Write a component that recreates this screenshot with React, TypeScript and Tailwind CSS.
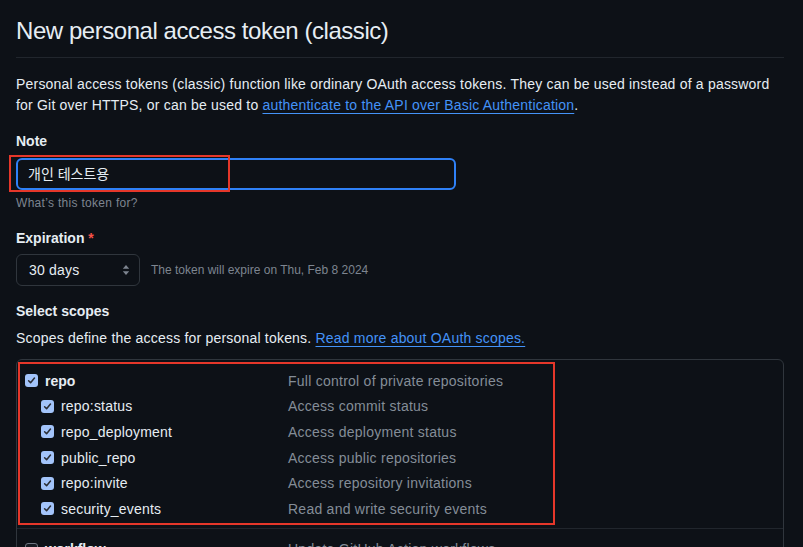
import type { ReactNode } from 'react';

// GitHub dark theme – "New personal access token (classic)" form

const scopes = [
  { name: 'repo:status', desc: 'Access commit status' },
  { name: 'repo_deployment', desc: 'Access deployment status' },
  { name: 'public_repo', desc: 'Access public repositories' },
  { name: 'repo:invite', desc: 'Access repository invitations' },
  { name: 'security_events', desc: 'Read and write security events' },
];

function Checkbox({ checked }: { checked: boolean }) {
  if (!checked) {
    return <span className="block w-[13px] h-[13px] shrink-0 rounded-[3px] border border-[#6e7681] bg-[#161b22]" />;
  }
  return (
    <span className="flex items-center justify-center w-[13px] h-[13px] shrink-0 rounded-[3px] bg-[#a3c4fa]">
      <svg width="9" height="9" viewBox="0 0 10 10" fill="none">
        <path d="M1.8 5.3 4 7.5 8.3 2.3" stroke="#2a2d33" strokeWidth="1.7" strokeLinecap="round" strokeLinejoin="round" />
      </svg>
    </span>
  );
}

function ScopeRow({ name, desc, checked, parent = false }: { name: string; desc: string; checked: boolean; parent?: boolean }) {
  return (
    <div className="grid grid-cols-[263px_1fr] items-center h-[25.6px]">
      <div className={`flex items-center gap-[7px] ${parent ? '' : 'pl-4'}`}>
        <Checkbox checked={checked} />
        <span className={parent ? 'font-bold text-[#e6edf3]' : 'text-[#e6edf3] tracking-[0.2px]'}>{name}</span>
      </div>
      <span className="text-[#848d97] tracking-[0.25px]">{desc}</span>
    </div>
  );
}

function Label({ children }: { children: ReactNode }) {
  return <div className="text-sm leading-[21px] font-bold text-[#e6edf3]">{children}</div>;
}

export default function App() {
  return (
    <div className="min-h-screen bg-[#0d1117] text-[#e6edf3] font-['Liberation_Sans','Noto_Sans_CJK_KR',sans-serif] overflow-hidden">
      <div className="w-[768px] ml-4 pt-[13px]">
        <h2 className="text-[24px] leading-[36px] font-normal tracking-[-0.45px] pb-2 border-b border-[#21262d]">
          New personal access token (classic)
        </h2>

        <p className="mt-4 text-sm leading-[21px] tracking-[0.2px]">
          Personal access tokens (classic) function like ordinary OAuth access tokens. They can be used instead of a password
          <br />
          for Git over HTTPS, or can be used to{' '}
          <a className="text-[#4493f8] underline underline-offset-[3px] decoration-[#4493f8]">authenticate to the API over Basic Authentication</a>.
        </p>

        <div className="mt-[15px]">
          <Label>Note</Label>
          <div className="relative mt-[6px] w-[440px]">
            <div className="h-8 rounded-md border-2 border-[#2f81f7] bg-[#0d1117] px-[10px] flex items-center text-sm text-[#e6edf3]">
              개인 테스트용
            </div>
            <div className="absolute left-[-7px] top-[-3px] w-[221px] h-[37px] border-2 border-[#e5372a]" />
          </div>
          <div className="mt-1 text-xs leading-[18px] text-[#7d8590] tracking-[0.3px]">What’s this token for?</div>
        </div>

        <div className="mt-4">
          <Label>
            Expiration <span className="text-[#f85149]">*</span>
          </Label>
          <div className="mt-[5px] flex items-center">
            <div className="w-[124px] h-8 rounded-md border border-[#30363d] bg-[#0d1117] pl-3 pr-[9px] flex items-center justify-between text-sm tracking-[0.2px]">
              <span>30 days</span>
              <svg width="8" height="12" viewBox="0 0 8 12" fill="#7d8590">
                <path d="M4 1 7.2 4.8H0.8Z" />
                <path d="M4 11 0.8 7.2h6.4Z" />
              </svg>
            </div>
            <span className="ml-[11px] text-xs text-[#7d8590]">The token will expire on Thu, Feb 8 2024</span>
          </div>
        </div>

        <div className="mt-[15px]">
          <Label>Select scopes</Label>
          <p className="mt-[6px] text-sm leading-[21px] tracking-[0.2px]">
            Scopes define the access for personal tokens.{' '}
            <a className="text-[#4493f8] underline underline-offset-[3px]">Read more about OAuth scopes.</a>
          </p>
        </div>

        <div className="mt-[10px] rounded-md border border-[#30363d] text-sm">
          <div className="relative px-2 pt-2 pb-[6px]">
            <ScopeRow name="repo" desc="Full control of private repositories" checked parent />
            {scopes.map((s) => (
              <ScopeRow key={s.name} name={s.name} desc={s.desc} checked />
            ))}
            <div className="absolute left-[1px] top-[2px] w-[537px] h-[163px] border-2 border-[#e5372a]" />
          </div>
          <div className="border-t border-[#21262d] px-2 pt-2 pb-2">
            <ScopeRow name="workflow" desc="Update GitHub Action workflows" checked={false} parent />
          </div>
        </div>
      </div>
    </div>
  );
}
